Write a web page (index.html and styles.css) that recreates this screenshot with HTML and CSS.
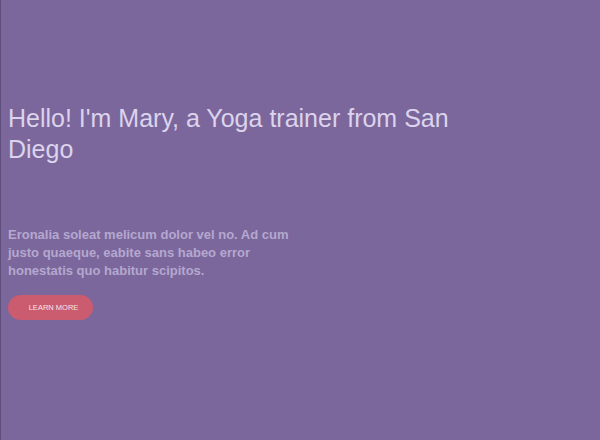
FILE: index.html
```html
<!DOCTYPE html>
<html lang="en">
<head>
<meta charset="utf-8">
<title>Mary - Yoga trainer</title>
<link rel="stylesheet" href="styles.css">
</head>
<body>
<main class="hero">
  <h1 class="hero-title">Hello! I'm Mary, a Yoga trainer from San Diego</h1>
  <p class="hero-text">Eronalia soleat melicum dolor vel no. Ad cum justo quaeque, eabite sans habeo error honestatis quo habitur scipitos.</p>
  <a class="btn" href="#">LEARN MORE</a>
</main>
</body>
</html>
```
FILE: styles.css
```css
html, body {
  margin: 0;
  padding: 0;
  height: 100%;
}
body {
  background: #7b679c;
  font-family: "Liberation Sans", Arial, Helvetica, sans-serif;
}
.hero {
  box-sizing: border-box;
  min-height: 100%;
  border-left: 1px solid #5f4f7d;
  padding: 103px 0 0 7px;
  display: flex;
  flex-direction: column;
  align-items: flex-start;
}
.hero-title {
  margin: 0;
  width: 460px;
  font-size: 25px;
  line-height: 31px;
  font-weight: 400;
  color: #dcd3ec;
}
.hero-text {
  margin: 61px 0 0;
  width: 290px;
  font-size: 13px;
  line-height: 18px;
  font-weight: 700;
  color: #b5a7cf;
}
.btn {
  box-sizing: border-box;
  margin-top: 15px;
  width: 85px;
  height: 25px;
  padding-left: 6px;
  border-radius: 13px;
  background: #cb5b6e;
  color: #f4e6ec;
  font-size: 7.5px;
  text-decoration: none;
  display: flex;
  align-items: center;
  justify-content: center;
}
```
